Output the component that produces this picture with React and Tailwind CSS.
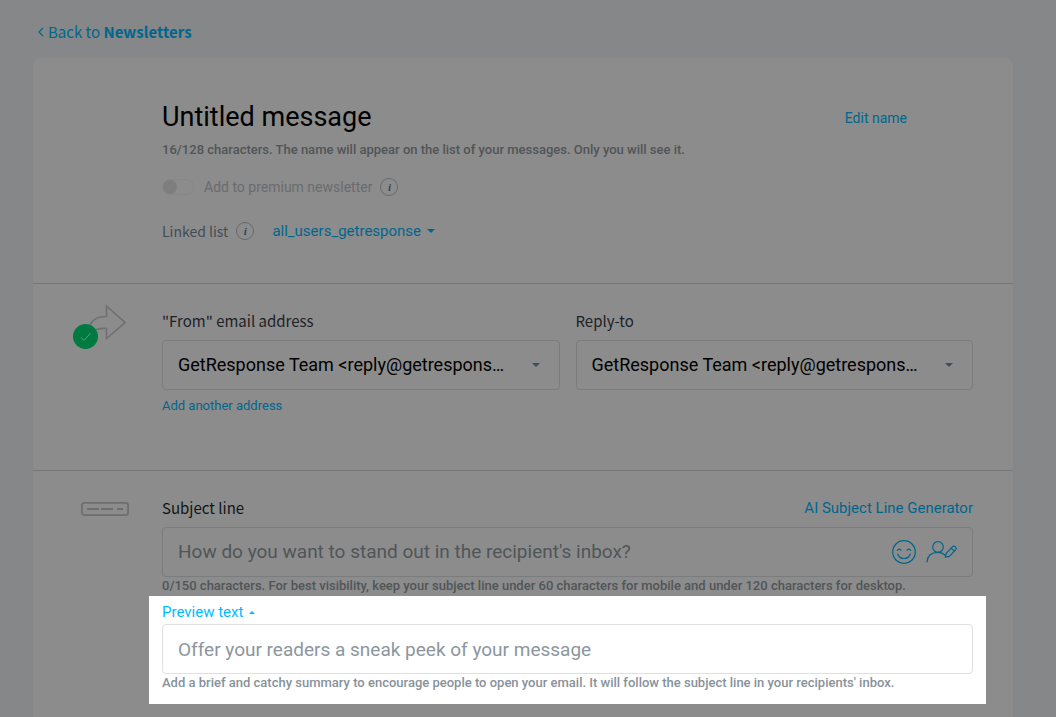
import { useState } from 'react'

const SENDER = 'GetResponse Team <reply@getrespons…'

function Caret({ up, className }) {
  return (
    <svg className={className} viewBox="0 0 8 4" fill="currentColor" aria-hidden="true">
      <path d={up ? 'M0 4 L4 0 L8 4 Z' : 'M0 0 L8 0 L4 4 Z'} />
    </svg>
  )
}

function InfoButton({ label }) {
  return (
    <button
      type="button"
      aria-label={label}
      className="flex size-[18px] items-center justify-center rounded-full border border-[#66696b] font-['Liberation_Serif',serif] text-[11px] leading-none font-bold italic text-[#35444d]"
    >
      i
    </button>
  )
}

function ShareIcon() {
  return (
    <svg className="h-9 w-[38px]" viewBox="0 0 38 36" fill="none" stroke="#6f7071" strokeWidth="1.6">
      <path d="M1 24 C3 16 9 12.5 18.5 12.5 V2 L37 18.5 L18.5 34.5 V24.5 C13 24 8 25 4 28" />
    </svg>
  )
}

function SubjectIcon() {
  return (
    <svg className="h-3.5 w-12" viewBox="0 0 48 14" fill="none" stroke="#6d6e6f" strokeWidth="1.8">
      <rect x="0.9" y="0.9" width="46.2" height="12.2" rx="2.5" />
      <path d="M6 7 H18 M20 7 H32 M36 7 H42" />
    </svg>
  )
}

function SmileIcon() {
  return (
    <svg className="size-6" viewBox="0 0 24 24" fill="none" stroke="currentColor" strokeWidth="1.2" strokeLinecap="round">
      <circle cx="12" cy="12" r="11.3" />
      <path d="M5.5 10.3 C6 8.6 8.4 8.6 8.9 10.3 M15.1 10.3 C15.6 8.6 18 8.6 18.5 10.3" />
      <path d="M5.8 14 C7.5 20 16.5 20 18.2 14" />
    </svg>
  )
}

function PersonalizeIcon() {
  return (
    <svg className="h-6 w-8" viewBox="0 0 32 24" fill="none" stroke="currentColor" strokeWidth="1.2" strokeLinecap="round" strokeLinejoin="round">
      <circle cx="12" cy="7" r="5.3" />
      <path d="M1 22 C1.5 15.5 6 12.3 12 12.3 C15 12.3 17.3 13.3 19.3 15.2" />
      <path d="M19.3 17.2 L20.2 13.3 L26.6 6.6 C28.3 5 31.3 7.8 29.8 9.7 L23.4 16.4 Z" />
      <path d="M25.2 8.1 L28.3 11.1" />
    </svg>
  )
}

function SenderSelect({ id, label }) {
  return (
    <div className="min-w-0 flex-1">
      <label htmlFor={id} className="block font-['Noto_Sans_CJK_SC',sans-serif] text-[15px] leading-5 text-[#1c2226]">
        {label}
      </label>
      <div className="relative mt-[9px]">
        <select
          id={id}
          className="h-[50px] w-full appearance-none truncate rounded-sm border border-[#7a7c7d] bg-[#8c8c8c] pr-10 pl-[15px] text-lg text-black"
        >
          <option>{SENDER}</option>
        </select>
        <Caret className="pointer-events-none absolute top-[23px] right-5 h-1 w-2 text-[#3f4e57]" />
      </div>
    </div>
  )
}

export default function App() {
  const [premium, setPremium] = useState(false)
  const [subject, setSubject] = useState('')
  const [preview, setPreview] = useState('')

  return (
    <div className="flex min-h-screen flex-col bg-[#858789] pr-[43px] pl-[33px] font-[Roboto,sans-serif] text-sm text-[#00668c]">
      <nav className="flex px-1 pt-[22px]">
        <a href="#newsletters" className="flex h-5 items-center gap-[3px] font-['Noto_Sans_CJK_SC',sans-serif] text-[15px] leading-5">
          <svg className="h-2.5 w-2" viewBox="0 0 8 10" fill="none" stroke="currentColor" strokeWidth="1.2" aria-hidden="true">
            <path d="M6 1 L2 5 L6 9" />
          </svg>
          <span>
            Back to <strong className="font-bold">Newsletters</strong>
          </span>
        </a>
      </nav>

      <main className="mt-4 flex grow flex-col rounded-t-lg bg-[#8c8c8c]">
        {/* Message name */}
        <section className="border-b border-[#757677] pt-[43px] pr-10 pb-[42px] pl-[129px]">
          <div className="flex items-center justify-between pr-[66px]">
            <h1 className="text-[27px] leading-8 text-black">Untitled message</h1>
            <button type="button" className="pt-0.5 text-sm leading-5">Edit name</button>
          </div>
          <p className="mt-[9px] text-[13px] leading-4 font-medium text-[#505558]">
            16/128 characters. The name will appear on the list of your messages. Only you will see it.
          </p>
          <div className="mt-[19px] flex h-5 items-center">
            <input
              id="premium"
              type="checkbox"
              checked={premium}
              onChange={(e) => setPremium(e.target.checked)}
              className="h-4 w-8 appearance-none rounded-full border border-[#868686] before:block before:size-3.5 before:rounded-full before:bg-[#7e7e7e] checked:before:ml-4"
            />
            <label htmlFor="premium" className="mr-2 ml-2.5 text-sm leading-5 text-[#696b6c]">
              Add to premium newsletter
            </label>
            <InfoButton label="About premium newsletters" />
          </div>
          <div className="mt-6 flex h-5 items-center">
            <span className="mr-2 font-['Noto_Sans_CJK_SC',sans-serif] text-sm leading-5 text-[#414e56]">Linked list</span>
            <InfoButton label="About linked list" />
            <button type="button" className="ml-[18px] flex items-center gap-1.5 text-[15px] leading-5">
              all_users_getresponse
              <Caret className="h-1 w-2" />
            </button>
          </div>
        </section>

        {/* Sender */}
        <section className="flex border-b border-[#757677] pt-[27px] pr-10 pb-[54px]">
          <div className="w-[129px] shrink-0">
            <div className="relative -mt-[7px] ml-[55px] w-[38px]">
              <ShareIcon />
              <span className="absolute top-5 -left-[15px] flex size-[25px] items-center justify-center rounded-full bg-[#007a40]">
                <svg className="h-2.5 w-3" viewBox="0 0 12 10" fill="none" stroke="#5f9a7c" strokeWidth="1" aria-hidden="true">
                  <path d="M1 5.5 L4 8.5 L10.5 1" />
                </svg>
              </span>
            </div>
          </div>
          <div className="min-w-0 grow">
            <div className="flex gap-4">
              <SenderSelect id="from" label={'"From" email address'} />
              <SenderSelect id="reply-to" label="Reply-to" />
            </div>
            <button type="button" className="mt-1.5 block text-[13px] leading-5">Add another address</button>
          </div>
        </section>

        {/* Subject line and preview text */}
        <section className="flex pt-[27px] pr-10">
          <div className="w-[129px] shrink-0 pt-1 pl-12">
            <SubjectIcon />
          </div>
          <div className="min-w-0 grow">
            <div className="flex items-center justify-between">
              <label htmlFor="subject" className="font-['Noto_Sans_CJK_SC',sans-serif] text-[15px] leading-5 text-[#101518]">
                Subject line
              </label>
              <button type="button" className="text-[15px] leading-5">AI Subject Line Generator</button>
            </div>
            <div className="mt-[9px] flex h-[50px] items-center rounded-sm border border-[#7a7c7d] pr-3.5 pl-[15px]">
              <input
                id="subject"
                type="text"
                value={subject}
                onChange={(e) => setSubject(e.target.value)}
                placeholder="How do you want to stand out in the recipient's inbox?"
                className="min-w-0 grow bg-transparent text-[19px] text-black outline-none placeholder:text-[#505558]"
              />
              <button type="button" aria-label="Insert emoji" className="ml-2">
                <SmileIcon />
              </button>
              <button type="button" aria-label="Personalize" className="ml-2.5">
                <PersonalizeIcon />
              </button>
            </div>
            <p className="mt-px text-[13px] leading-4 font-medium text-[#505558]">
              0/150 characters. For best visibility, keep your subject line under 60 characters for mobile and under 120 characters for desktop.
            </p>

            <div className="-mx-[13px] mt-0.5 bg-white px-[13px] pt-1.5 pb-[13px]">
              <label htmlFor="preview" className="flex items-center gap-1.5 text-[15px] leading-5 text-[#00baff]">
                Preview text
                <Caret up className="h-[3px] w-1.5" />
              </label>
              <input
                id="preview"
                type="text"
                value={preview}
                onChange={(e) => setPreview(e.target.value)}
                placeholder="Offer your readers a sneak peek of your message"
                className="mt-0.5 block h-[50px] w-full rounded-sm border border-[#dee0e1] px-[15px] text-[19px] text-black outline-none placeholder:text-[#8c969e]"
              />
              <p className="mt-px text-[13px] leading-4 font-medium text-[#88929b]">
                Add a brief and catchy summary to encourage people to open your email. It will follow the subject line in your recipients' inbox.
              </p>
            </div>
          </div>
        </section>
      </main>
    </div>
  )
}
